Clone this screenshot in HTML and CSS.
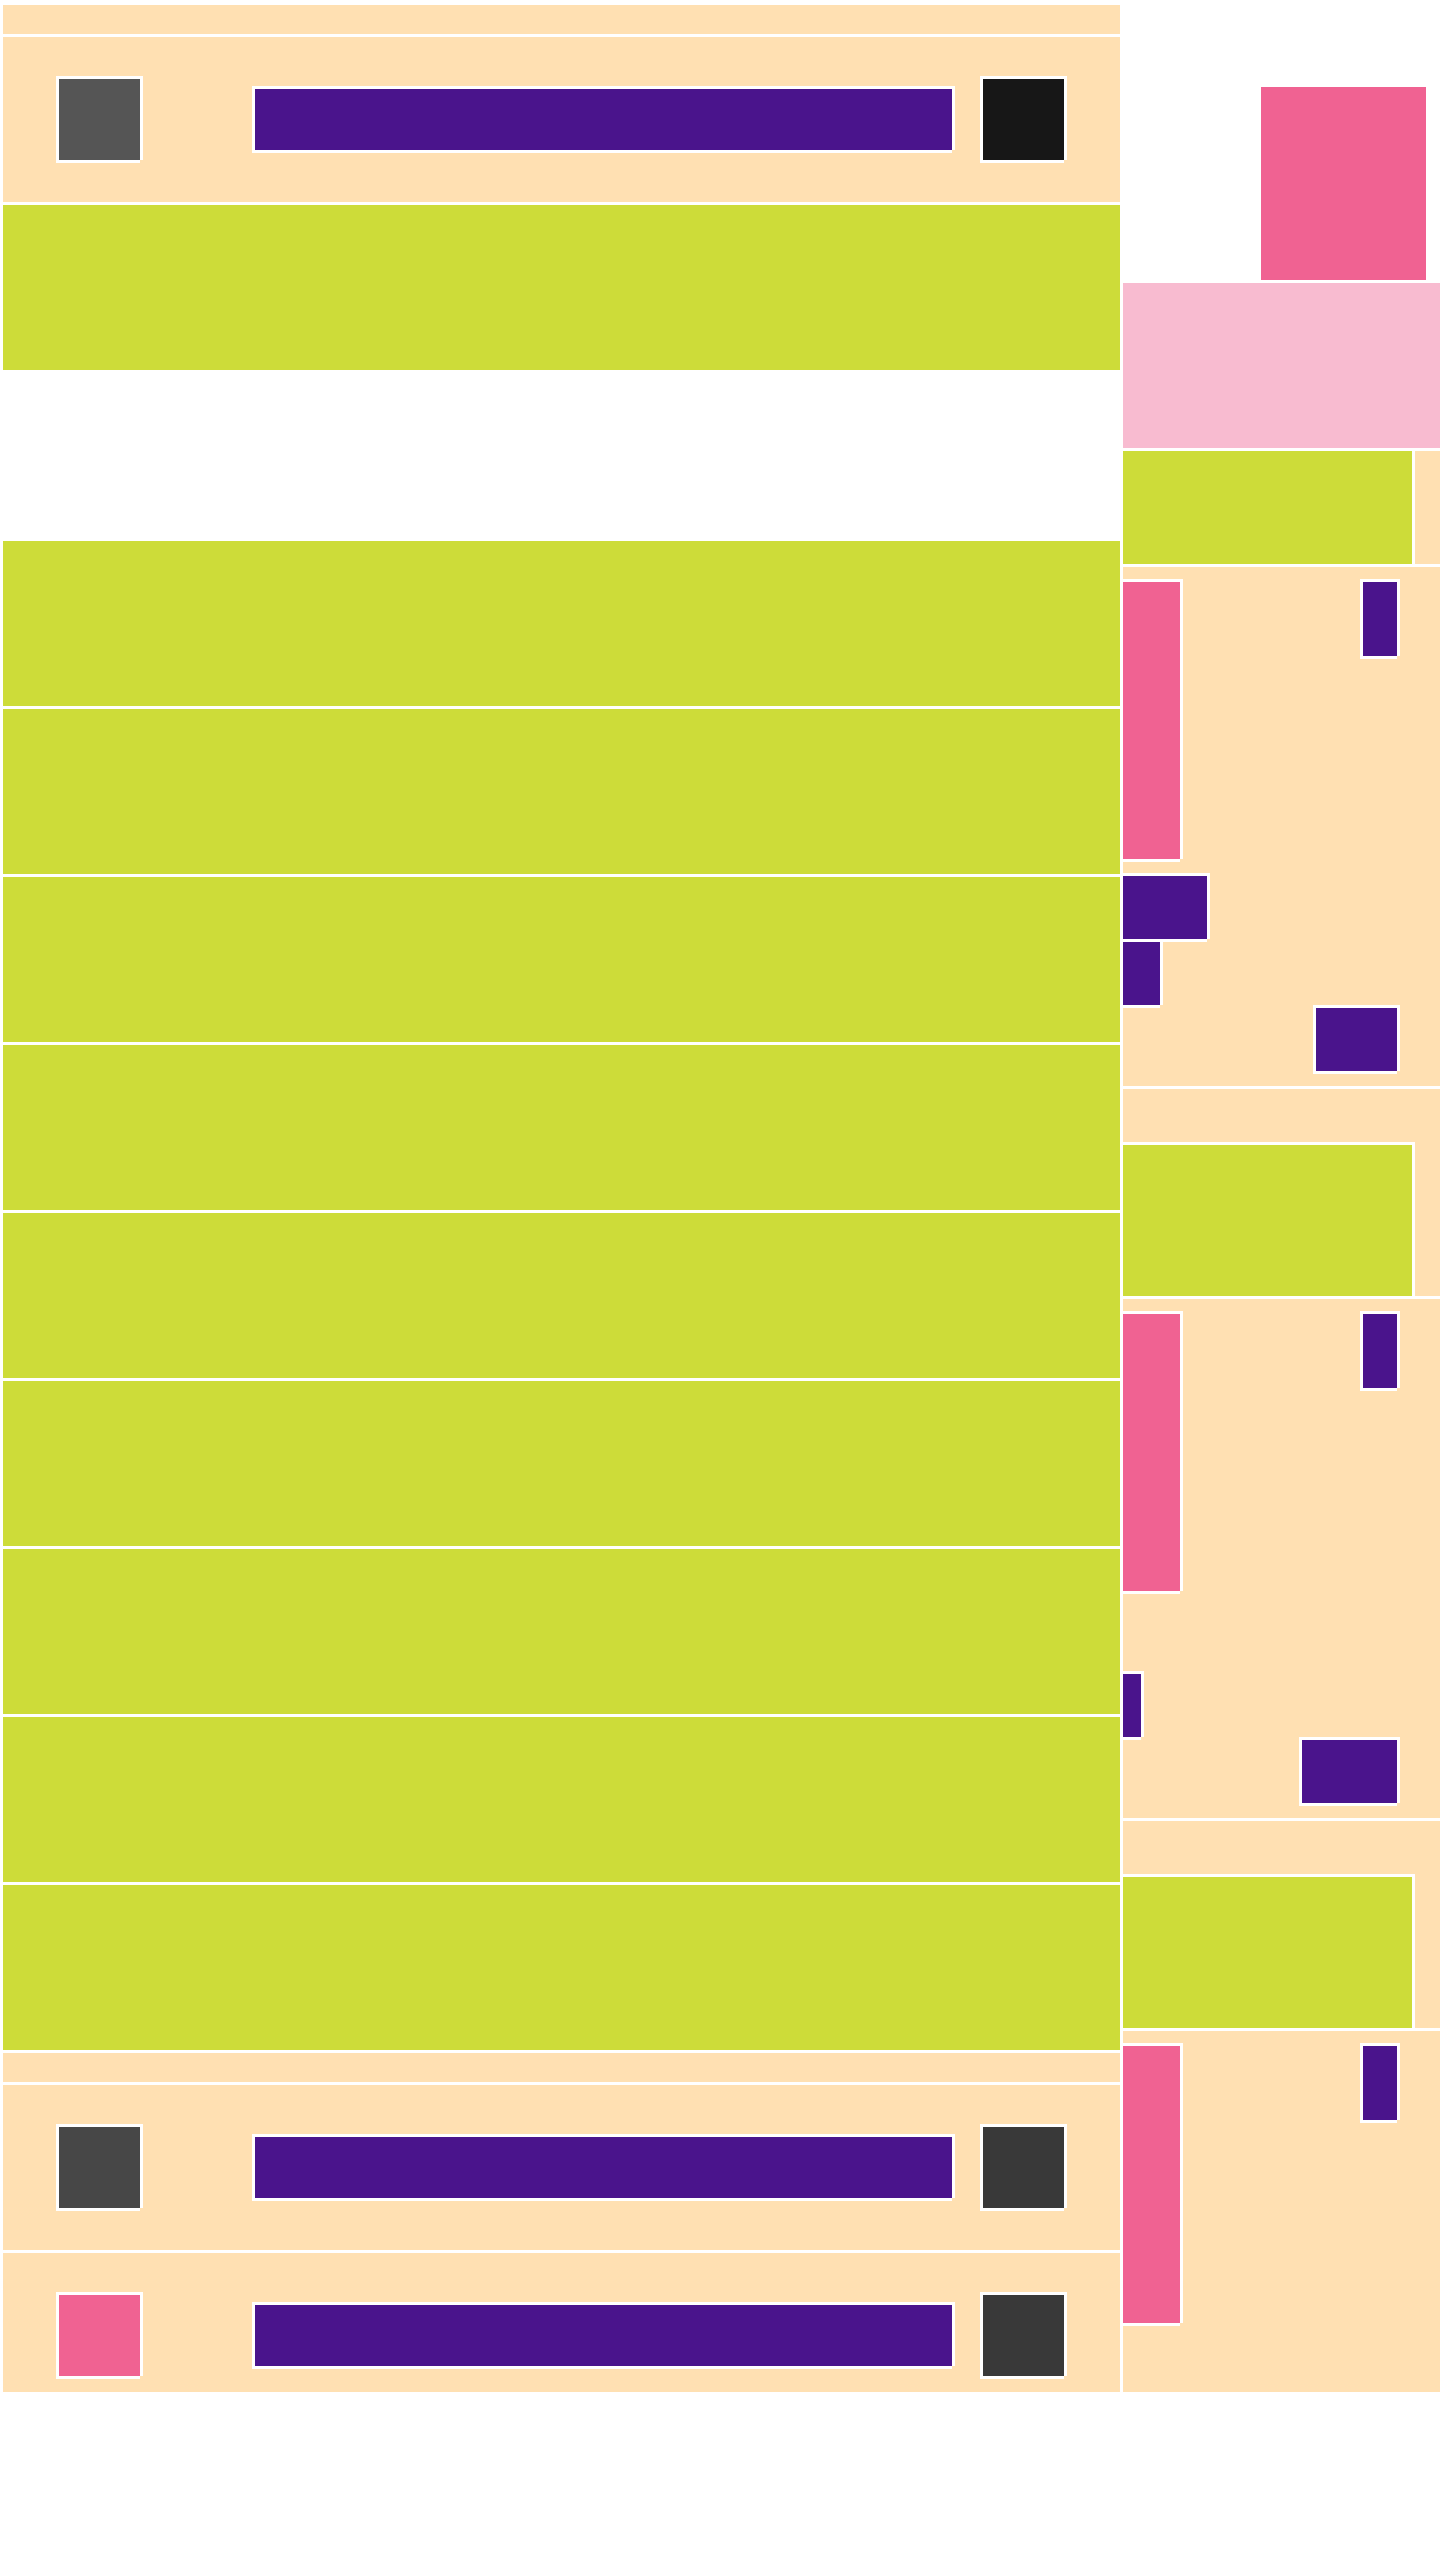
FILE: index.html
```html
<!DOCTYPE html>
<html lang="en">
<head>
    <meta charset="UTF-8">
    <meta name="viewport" content="width=device-width, initial-scale=1.0">
    <title>Layout</title>
    <link rel="stylesheet" href="styles.css">
</head>
<body>
    <div class="page">
        <div class="main">
            <div class="strip"></div>
            <div class="bar">
                <span class="sq sq-gray fr"></span>
                <span class="line fr"></span>
                <span class="sq sq-black fr"></span>
            </div>
            <div class="row"></div>
            <div class="spacer"></div>
            <div class="row"></div>
            <div class="row"></div>
            <div class="row"></div>
            <div class="row"></div>
            <div class="row"></div>
            <div class="row"></div>
            <div class="row"></div>
            <div class="row"></div>
            <div class="row"></div>
            <div class="strip"></div>
            <div class="bar">
                <span class="sq sq-dim fr"></span>
                <span class="line fr"></span>
                <span class="sq sq-dark fr"></span>
            </div>
            <div class="bar">
                <span class="sq sq-pink fr"></span>
                <span class="line fr"></span>
                <span class="sq sq-dark fr"></span>
            </div>
        </div>

        <aside class="side">
            <div class="promo"><span class="promo-img"></span></div>
            <div class="banner"></div>
            <div class="card card-first"><span class="card-fill fr"></span></div>

            <div class="widget">
                <div class="widget-top">
                    <span class="w-bar fr"></span>
                    <span class="w-tag fr"></span>
                </div>
                <div class="w-lines">
                    <div class="w-line fr w84"></div>
                    <div class="w-line fr w37"></div>
                    <div class="w-line fr w81 end"></div>
                </div>
            </div>

            <div class="card"><span class="card-fill fr"></span></div>

            <div class="widget">
                <div class="widget-top">
                    <span class="w-bar fr"></span>
                    <span class="w-tag fr"></span>
                </div>
                <div class="w-lines">
                    <div class="w-line empty"></div>
                    <div class="w-line fr w18"></div>
                    <div class="w-line fr w95 end"></div>
                </div>
            </div>

            <div class="card"><span class="card-fill fr"></span></div>

            <div class="widget">
                <div class="widget-top">
                    <span class="w-bar fr"></span>
                    <span class="w-tag fr"></span>
                </div>
            </div>
        </aside>
    </div>
</body>
</html>
```

FILE: styles.css
```css
body {
    margin: 0;
    background-color: #fff;
    font-family: "Liberation Sans", Arial, sans-serif;
}
.page {
    display: grid;
    grid-template-columns: 1117px 317px;
    column-gap: 3px;
    align-items: start;
    padding: 5px 0 0 3px;
    height: 2387px;
    overflow: hidden;
}

/* white frame round each box */
.fr {
    box-shadow: -3px -3px 0 #fff, 3px -3px 0 #fff, 3px 0 0 #fff, -3px 3px 0 #fff, 0 3px 0 #fff;
}

.main {
    display: flex;
    flex-direction: column;
    gap: 3px;
}
.main > div {
    flex-shrink: 0;
}
.strip {
    height: 29px;
    background-color: #ffe0b2;
}
.bar {
    height: 165px;
    background-color: #ffe0b2;
    display: flex;
    align-items: center;
    padding: 0 56px;
}
.sq {
    width: 81px;
    height: 81px;
    flex-shrink: 0;
}
.sq-gray { background-color: #555555; }
.sq-black { background-color: #171717; }
.sq-dim { background-color: #474747; }
.sq-dark { background-color: #393939; }
.sq-pink { background-color: #f06292; }
.line {
    width: 697px;
    height: 61px;
    margin: 0 31px 0 115px;
    background-color: #4a148c;
}
.row {
    height: 165px;
    background-color: #cddc39;
}
.spacer {
    height: 165px;
}

.side {
    display: flex;
    flex-direction: column;
    gap: 3px;
}
.side > div {
    flex-shrink: 0;
}
.promo {
    height: 275px;
    display: flex;
    justify-content: flex-end;
    align-items: flex-end;
    padding-right: 14px;
}
.promo-img {
    width: 165px;
    height: 193px;
    background-color: #f06292;
}
.banner {
    height: 165px;
    background-color: #f8bbd0;
}
.card {
    height: 207px;
    background-color: #ffe0b2;
    display: flex;
    align-items: flex-end;
}
.card-fill {
    width: 289px;
    height: 151px;
    background-color: #cddc39;
}
.card-first {
    height: 113px;
}
.card-first .card-fill {
    height: 113px;
}

.widget {
    height: 519px;
    box-sizing: border-box;
    padding: 15px 43px 15px 0;
    background-color: #ffe0b2;
}
.widget-top {
    display: flex;
    justify-content: space-between;
    align-items: flex-start;
}
.w-bar {
    width: 57px;
    height: 277px;
    background-color: #f06292;
}
.w-tag {
    width: 34px;
    height: 74px;
    background-color: #4a148c;
}
.w-lines {
    display: flex;
    flex-direction: column;
    align-items: flex-start;
    gap: 3px;
    margin-top: 17px;
}
.w-line {
    height: 63px;
    background-color: #4a148c;
}
.w-line.empty {
    background: none;
}
.w-line.end {
    align-self: flex-end;
}
.w18 { width: 18px; }
.w37 { width: 37px; }
.w81 { width: 81px; }
.w84 { width: 84px; }
.w95 { width: 95px; }
```
